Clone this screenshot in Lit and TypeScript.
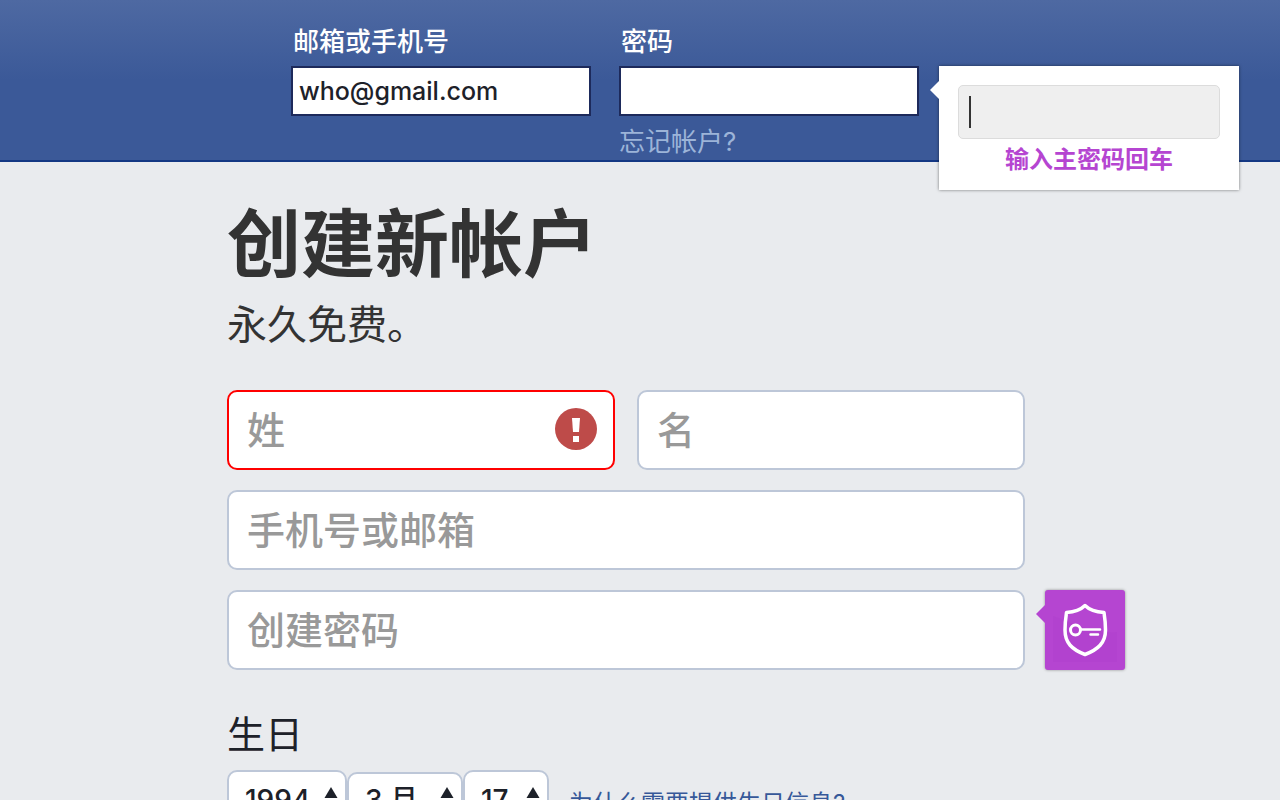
import { LitElement, html, css, svg } from "lit";
import { customElement, property } from "lit/decorators.js";

const sortArrows = html`<svg class="arrows" viewBox="0 0 14 28" aria-hidden="true">
  <path d="M7 0 13.500 11H.5Z" />
  <path d="M7 28 .5 17h13Z" />
</svg>`;

const alertMark = svg`
  <circle cx="21" cy="21" r="21" fill="#be4b49" />
  <path d="M17 10h8l-1 14h-6Z" fill="#fff" />
  <rect x="18" y="28" width="6" height="6" fill="#fff" />`;

@customElement("date-select")
class DateSelect extends LitElement {
  @property() label = "";
  @property() value = "";

  static styles = css`
    :host {
      display: block;
      position: relative;
    }
    .select {
      appearance: none;
      box-sizing: border-box;
      width: 100%;
      height: 60px;
      margin: 0;
      padding: 0 16px;
      border: 2px solid #bdc7d8;
      border-radius: 10px;
      background: #fff;
      color: #1d2129;
      font: 500 28px/36px Inter, "Noto Sans CJK SC", sans-serif;
    }
    :host(.short) .select {
      height: 56px;
    }
    .arrows {
      position: absolute;
      right: 9px;
      top: 50%;
      width: 14px;
      height: 28px;
      margin-top: -13px;
      fill: #1d2129;
      pointer-events: none;
    }
  `;

  render() {
    return html`
      <select class="select" aria-label=${this.label}>
        <option selected>${this.value}</option>
      </select>
      ${sortArrows}
    `;
  }
}

@customElement("app-root")
class AppRoot extends LitElement {
  static styles = css`
    :host {
      display: block;
      height: 100vh;
      overflow: hidden;
      background: #e9ebee;
      color: #1d2129;
      font: 26px/30px Inter, "Noto Sans CJK SC", sans-serif;
    }
    * {
      box-sizing: border-box;
    }
    input {
      font-family: inherit;
      margin: 0;
      outline: none;
    }
    a {
      text-decoration: none;
    }
    .header {
      display: flex;
      gap: 28px;
      padding: 27px 40px 3px 291px;
      border-bottom: 2px solid #133783;
      background: linear-gradient(#4e69a2, #3b5998 50%);
    }
    .login {
      display: flex;
      flex-direction: column;
      flex: 0 1 300px;
    }
    .login label {
      padding: 0 2px;
      margin-bottom: 9px;
      color: #fff;
      font-weight: 500;
    }
    .login-input {
      width: 100%;
      height: 50px;
      padding: 0 6px;
      border: 2px solid #1d2a5b;
      background: #fff;
      color: #1d2129;
      font-size: 25px;
      font-weight: 500;
    }
    .forgot {
      margin-top: 11px;
      color: #9cb4d8;
    }
    .anchor {
      position: relative;
    }
    .popover {
      position: absolute;
      z-index: 2;
      top: 0;
      left: calc(100% + 20px);
      width: 300px;
      padding: 19px 19px 15px;
      background: #fff;
      box-shadow: 0 0 3px rgba(0, 0, 0, 0.5);
      text-align: center;
    }
    .popover::before,
    .shield::before {
      content: "";
      position: absolute;
      right: 100%;
      top: 15px;
      border: solid transparent;
      border-width: 9px 9px 9px 0;
      border-right-color: #fff;
    }
    .master {
      display: block;
      width: 100%;
      height: 54px;
      padding: 0 10px;
      border: 1px solid #dcdcdc;
      border-radius: 5px;
      background: #efefef;
      font-size: 26px;
    }
    .caret {
      position: absolute;
      left: 30px;
      top: 30px;
      width: 2px;
      height: 32px;
      background: #333;
    }
    .popover label {
      display: block;
      margin: 6px 0 0;
      padding: 0;
      color: #b545d1;
      font-size: 24px;
      font-weight: 700;
    }
    .main {
      max-width: 1025px;
      padding: 42px 0 0 227px;
    }
    .title {
      margin: 0;
      color: #333;
      font-size: 74px;
      line-height: 80px;
      font-weight: 700;
    }
    .subtitle {
      margin: 16px 0 40px;
      color: #333;
      font-size: 40px;
      line-height: 50px;
    }
    .form {
      display: grid;
      grid-template-columns: 1fr 1fr;
      gap: 20px 22px;
    }
    .field {
      position: relative;
    }
    .wide {
      grid-column: 1 / -1;
    }
    .input {
      display: block;
      width: 100%;
      height: 80px;
      padding: 0 18px;
      border: 2px solid #bdc7d8;
      border-radius: 10px;
      background: #fff;
      color: #1d2129;
      font-size: 38px;
      font-weight: 500;
    }
    .input::placeholder {
      color: #999;
      opacity: 1;
    }
    .invalid {
      border-color: #f00;
    }
    .alert {
      position: absolute;
      right: 18px;
      top: 18px;
      width: 42px;
      height: 42px;
    }
    .shield {
      position: absolute;
      left: calc(100% + 20px);
      top: 0;
      width: 80px;
      height: 80px;
      padding: 0;
      border: 0;
      border-radius: 3px;
      background: #b545d1;
      box-shadow: 0 0 3px rgba(0, 0, 0, 0.4);
    }
    .shield::before {
      border-right-color: #b545d1;
    }
    .shield svg {
      display: block;
      width: 80px;
      height: 80px;
    }
    .birthday {
      margin: 39px 0 11px;
      font-size: 38px;
      line-height: 50px;
      font-weight: 400;
    }
    .dates {
      display: flex;
      align-items: center;
    }
    .year {
      width: 120px;
    }
    .month {
      width: 116px;
    }
    .day {
      width: 86px;
    }
    .why {
      margin: 8px 0 0 20px;
      color: #365899;
      font-size: 24px;
    }
  `;

  render() {
    return html`
      <header class="header">
        <div class="login">
          <label for="email">邮箱或手机号</label>
          <input class="login-input" id="email" type="text" value="who@gmail.com" />
        </div>
        <div class="login">
          <label for="pass">密码</label>
          <div class="anchor">
            <input class="login-input" id="pass" type="password" />
            <div class="popover">
              <input class="master" id="master" type="password" />
              <span class="caret"></span>
              <label for="master">输入主密码回车</label>
            </div>
          </div>
          <a class="forgot" href="#">忘记帐户?</a>
        </div>
      </header>
      <main class="main">
        <h1 class="title">创建新帐户</h1>
        <p class="subtitle">永久免费。</p>
        <form class="form">
          <div class="field">
            <input class="input invalid" type="text" placeholder="姓" aria-label="姓" />
            <svg class="alert" viewBox="0 0 42 42" aria-hidden="true">${alertMark}</svg>
          </div>
          <div class="field">
            <input class="input" type="text" placeholder="名" aria-label="名" />
          </div>
          <div class="field wide">
            <input class="input" type="text" placeholder="手机号或邮箱" aria-label="手机号或邮箱" />
          </div>
          <div class="field wide">
            <input class="input" type="password" placeholder="创建密码" aria-label="创建密码" />
            <button class="shield" type="button" aria-label="密码">
              <svg viewBox="0 0 80 80" fill="none" stroke="#fff" aria-hidden="true">
                <path
                  d="M8 26C26 32 46 44 72 42V72H8Z"
                  fill="#b03fcd"
                  fill-opacity=".5"
                  stroke="none"
                />
                <path
                  d="M40 15.500C36 19.500 29 22 21.500 22.500C20.500 29 20 34 20 40C20 53 27 59.500 40 64.500C53 59.500 60.500 53 60.500 40C60.500 34 60 29 59 22.500C51 22 44 19.500 40 15.500Z"
                  stroke-width="3.500"
                  stroke-linejoin="round"
                />
                <circle cx="30.500" cy="40" r="5" stroke-width="3" />
                <path d="M36 39.500H55M45.500 44.500H53" stroke-width="2.500" stroke-linecap="round" />
              </svg>
            </button>
          </div>
        </form>
        <h2 class="birthday">生日</h2>
        <div class="dates">
          <date-select class="year" label="年" value="1994"></date-select>
          <date-select class="month short" label="月" value="3 月"></date-select>
          <date-select class="day" label="日" value="17"></date-select>
          <a class="why" href="#">为什么需要提供生日信息?</a>
        </div>
      </main>
    `;
  }
}
